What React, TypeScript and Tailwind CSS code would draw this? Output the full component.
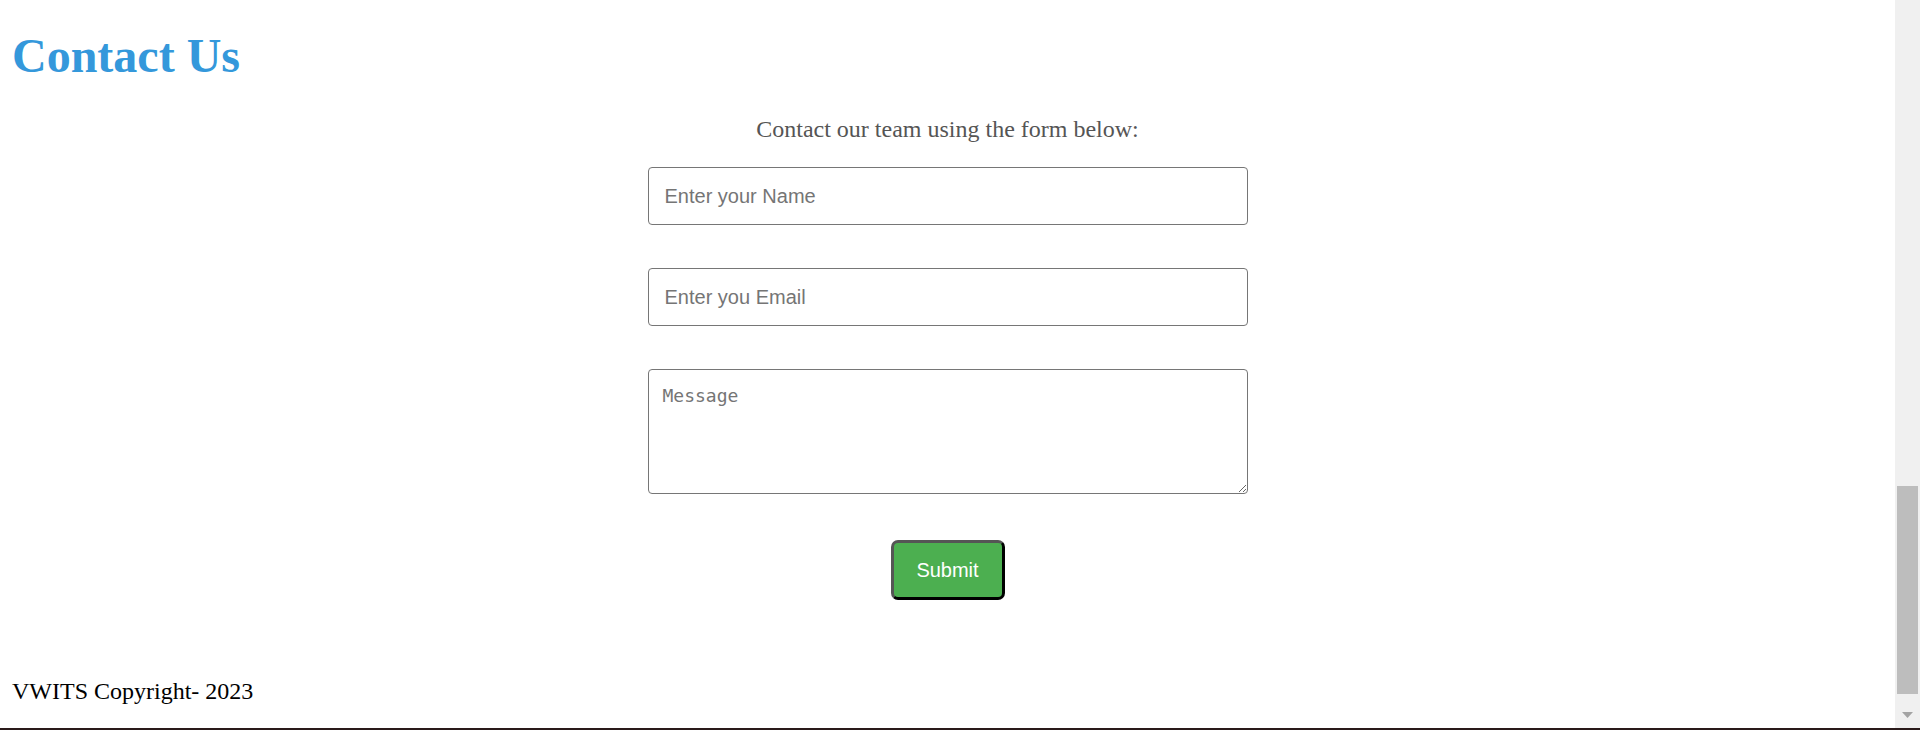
import React from "react";

export default function App() {
  return (
    <div className="w-[1920px] h-[730px] overflow-hidden bg-white flex flex-col">
      <div className="flex flex-row h-[728px]">
        <main className="flex-1 flex flex-col">
          <h1
            className="mt-[32px] pl-[12px] text-[48px] leading-[48px] font-bold text-[#3498db]"
            style={{ fontFamily: '"Liberation Serif", "Times New Roman", serif' }}
          >
            Contact Us
          </h1>
          <p
            className="mt-[37px] text-center text-[24px] leading-[24px] text-[#555555]"
            style={{ fontFamily: '"Liberation Serif", "Times New Roman", serif' }}
          >
            Contact our team using the form below:
          </p>
          <form className="flex flex-col items-center">
            <input
              type="text"
              placeholder="Enter your Name"
              className="mt-[26px] w-[600px] h-[58px] px-[16px] border border-[#767676] rounded-[4px] text-[20px] placeholder:text-[#757575] outline-none"
              style={{ fontFamily: '"Liberation Sans", Arial, sans-serif' }}
            />
            <input
              type="email"
              placeholder="Enter you Email"
              className="mt-[43px] w-[600px] h-[58px] px-[16px] border border-[#767676] rounded-[4px] text-[20px] placeholder:text-[#757575] outline-none"
              style={{ fontFamily: '"Liberation Sans", Arial, sans-serif' }}
            />
            <textarea
              placeholder="Message"
              className="mt-[43px] w-[600px] h-[125px] px-[14px] py-[14px] border border-[#767676] rounded-[4px] text-[18px] leading-[24px] placeholder:text-[#757575] outline-none resize"
              style={{ fontFamily: '"DejaVu Sans Mono", "Liberation Mono", monospace' }}
            />
            <button
              type="button"
              className="mt-[46px] w-[114px] h-[60px] bg-[#4caf50] text-white text-[20px] rounded-[7px] border-[3px] border-t-[#555555] border-l-[#555555] border-b-black border-r-black"
              style={{ fontFamily: '"Liberation Sans", Arial, sans-serif' }}
            >
              Submit
            </button>
          </form>
          <footer
            className="mt-[79px] pl-[12px] text-[24px] leading-[24px] text-black"
            style={{ fontFamily: '"Liberation Serif", "Times New Roman", serif' }}
          >
            VWITS Copyright- 2023
          </footer>
        </main>
        <div className="w-[25px] bg-[#f0f0f0] flex flex-col">
          <div className="flex-1" />
          <div className="mx-[2px] h-[208px] bg-[#bdbdbd]" />
          <div className="h-[34px] flex justify-center pt-[18px]">
            <svg width="11" height="6" viewBox="0 0 11 6">
              <polygon points="0,0 11,0 5.5,6" fill="#a3a3a3" />
            </svg>
          </div>
        </div>
      </div>
      <div className="h-[2px] bg-[#2a1a1a]" />
    </div>
  );
}
